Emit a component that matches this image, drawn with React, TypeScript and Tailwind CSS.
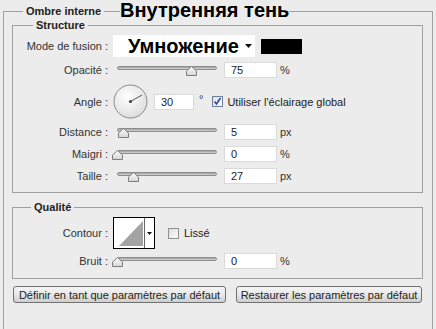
import type { ReactNode } from "react"

// rangées du panneau "Structure"
const sliders = [
  { label: "Distance :", pos: 6, value: "5", unit: "px" },
  { label: "Maigri :", pos: 0, value: "0", unit: "%" },
  { label: "Taille :", pos: 16, value: "27", unit: "px" },
]

function Label({ children }: { children: ReactNode }) {
  return <div className="w-[95px] shrink-0 text-right text-[#333]">{children}</div>
}

function Slider({ pos }: { pos: number }) {
  return (
    <div className="relative ml-[5px] h-[16px] w-[106px] shrink-0">
      <div className="absolute top-[4px] right-[2px] left-[4px] h-[4px] rounded-full border border-[#8e8e8e] bg-gradient-to-b from-[#9c9c9c] to-[#d8d8d8]" />
      <svg className="absolute top-[4px]" style={{ left: pos - 1.5 }} width="11" height="10" viewBox="0 0 11 10">
        <defs>
          <linearGradient id="thumb" x1="0" y1="0" x2="0" y2="1">
            <stop offset="0" stopColor="#ffffff" />
            <stop offset="1" stopColor="#d4d4d4" />
          </linearGradient>
        </defs>
        <path d="M5.5 0.5 L10.5 5 L10.5 9.5 L0.5 9.5 L0.5 5 Z" fill="url(#thumb)" stroke="#7c7c7c" />
      </svg>
    </div>
  )
}

function Field({ value, className = "w-[53px]" }: { value: string; className?: string }) {
  return (
    <div className={`flex h-[16px] shrink-0 items-center border border-[#dadada] bg-white pl-[6px] text-[#222] ${className}`}>
      {value}
    </div>
  )
}

function Check({ checked }: { checked?: boolean }) {
  return (
    <svg width="11" height="11" viewBox="0 0 11 11" className="shrink-0">
      <defs>
        <linearGradient id="cb" x1="0" y1="0" x2="1" y2="1">
          <stop offset="0" stopColor="#dcdcdc" />
          <stop offset="1" stopColor="#ffffff" />
        </linearGradient>
      </defs>
      <rect x="0.5" y="0.5" width="10" height="10" fill="url(#cb)" stroke={checked ? "#6d7f99" : "#8f8f8f"} />
      {checked && <path d="M2.5 5.5 L4.5 8 L8.5 2" fill="none" stroke="#2b48a8" strokeWidth="1.6" />}
    </svg>
  )
}

function Button({ children, className }: { children: ReactNode; className: string }) {
  return (
    <div
      className={`flex h-[17px] items-center justify-center rounded-[3px] border border-[#707070] bg-gradient-to-b from-[#f5f5f5] via-[#e8e8e8] to-[#cfcfcf] text-[#222] ${className}`}
    >
      {children}
    </div>
  )
}

export default function App() {
  return (
    <div className="relative h-[329px] w-[436px] overflow-hidden bg-[#ececec] pt-[4px] font-['Liberation_Sans',Arial,sans-serif] text-[11px] leading-[14px]">
      <fieldset className="ml-[3px] h-[360px] w-[430px] border border-[#a0a0a0]">
        <legend className="ml-[19px] px-[3px] font-bold text-[#222]">Ombre interne</legend>

        {/* Structure */}
        <fieldset className="ml-[8px] w-[411px] border border-[#a0a0a0] pb-[8px]">
          <legend className="ml-[20px] px-[3px] font-bold text-[#222]">Structure</legend>

          <div className="mt-[3px] flex h-[22px] items-center">
            <Label>Mode de fusion :</Label>
            <div className="ml-[5px] flex h-[22px] w-[142px] items-center bg-white pl-[15px] text-[20px] leading-[22px] font-bold text-black">
              Умножение
              <svg className="mr-[3px] ml-auto" width="7" height="4" viewBox="0 0 7 4">
                <path d="M0 0 H7 L3.5 4 Z" fill="#111" />
              </svg>
            </div>
            <div className="ml-[6px] h-[15px] w-[41px] bg-black" />
          </div>

          <div className="mt-[5px] flex h-[16px] items-center">
            <Label>Opacité :</Label>
            <Slider pos={74} />
            <div className="ml-[5px]">
              <Field value="75" />
            </div>
            <span className="ml-[3px] text-[#333]">%</span>
          </div>

          <div className="mt-[6px] flex h-[35px] items-center">
            <Label>Angle :</Label>
            <svg className="ml-[5px] shrink-0" width="35" height="35" viewBox="0 0 35 35">
              <defs>
                <radialGradient id="dial" cx="0.4" cy="0.35" r="0.7">
                  <stop offset="0" stopColor="#ffffff" />
                  <stop offset="1" stopColor="#dcdcdc" />
                </radialGradient>
              </defs>
              <circle cx="17.5" cy="17.5" r="16.5" fill="url(#dial)" stroke="#8a8a8a" />
              <line x1="17.5" y1="17.5" x2="29" y2="11" stroke="#555" strokeWidth="1" />
              <circle cx="17.5" cy="17.5" r="1.6" fill="#444" />
            </svg>
            <div className="ml-[6px]">
              <Field value="30" className="w-[40px]" />
            </div>
            <span className="ml-[5px] -mt-[6px] text-[#333]">°</span>
            <div className="ml-[9px] flex items-center">
              <Check checked />
              <span className="ml-[4px] text-[#222]">Utiliser l'éclairage global</span>
            </div>
          </div>

          {sliders.map((s, i) => (
            <div key={s.label} className={`flex h-[16px] items-center ${i === 0 ? "mt-[5px]" : "mt-[6px]"}`}>
              <Label>{s.label}</Label>
              <Slider pos={s.pos} />
              <div className="ml-[5px]">
                <Field value={s.value} />
              </div>
              <span className="ml-[3px] text-[#333]">{s.unit}</span>
            </div>
          ))}
        </fieldset>

        {/* Qualité */}
        <fieldset className="mt-[7px] ml-[8px] w-[411px] border border-[#a0a0a0] pb-[9px]">
          <legend className="ml-[18px] px-[3px] font-bold text-[#222]">Qualité</legend>

          <div className="mt-[3px] flex h-[32px] items-center">
            <Label>Contour :</Label>
            <div className="ml-[5px] flex h-[32px] w-[42px] shrink-0 border border-black bg-white">
              <svg width="30" height="30" viewBox="0 0 30 30" className="shrink-0">
                <polygon points="5,28 29,3 29,28" fill="#a3a3a3" />
              </svg>
              <div className="flex flex-1 items-center justify-center border-l border-[#666]">
                <svg width="5" height="3" viewBox="0 0 5 3">
                  <path d="M0 0 H5 L2.5 3 Z" fill="#111" />
                </svg>
              </div>
            </div>
            <div className="ml-[13px] flex items-center">
              <Check />
              <span className="ml-[5px] text-[#222]">Lissé</span>
            </div>
          </div>

          <div className="mt-[4px] flex h-[16px] items-center">
            <Label>Bruit :</Label>
            <Slider pos={0} />
            <div className="ml-[5px]">
              <Field value="0" />
            </div>
            <span className="ml-[3px] text-[#333]">%</span>
          </div>
        </fieldset>

        <div className="mt-[7px] ml-[9px] flex gap-[10px]">
          <Button className="w-[213px]">Définir en tant que paramètres par défaut</Button>
          <Button className="w-[186px]">Restaurer les paramètres par défaut</Button>
        </div>
      </fieldset>

      {/* titre collé par-dessus la légende */}
      <div className="absolute top-0 left-[120px] bg-[#ececec] text-[20px] leading-[20px] font-bold text-black">
        Внутренняя тень
      </div>
    </div>
  )
}
